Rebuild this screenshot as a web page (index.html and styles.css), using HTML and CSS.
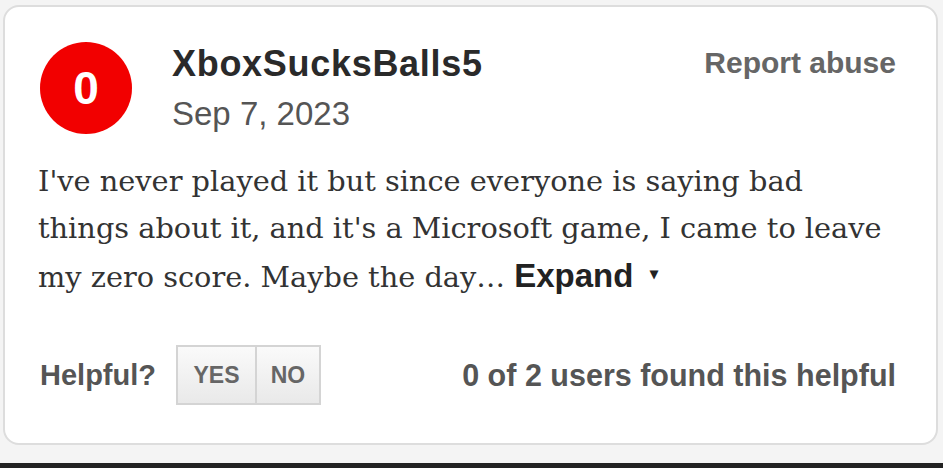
FILE: index.html
```html
<!DOCTYPE html>
<html lang="en">
<head>
  <meta charset="UTF-8">
  <title>User review</title>
  <link rel="stylesheet" href="styles.css">
</head>
<body>
  <div class="page">
    <div class="review">
      <div class="review-head">
        <div class="score">0</div>
        <div class="author">
          <div class="author-name">XboxSucksBalls5</div>
          <div class="review-date">Sep 7, 2023</div>
        </div>
        <a class="report" href="#">Report abuse</a>
      </div>

      <p class="review-body">I've never played it but since everyone is saying bad things about it, and it's a Microsoft game, I came to leave my zero score. Maybe the day&hellip; <a class="expand" href="#">Expand<span class="caret">&#9662;</span></a></p>

      <div class="review-foot">
        <div class="helpful">
          <span class="helpful-label">Helpful?</span>
          <div class="vote">
            <button type="button" class="yes">YES</button>
            <button type="button">NO</button>
          </div>
        </div>
        <div class="helpful-count">0 of 2 users found this helpful</div>
      </div>
    </div>
  </div>
</body>
</html>
```

FILE: styles.css
```css
body {
  margin: 0;
  background: #f4f4f4;
  font-family: "Liberation Sans", Arial, sans-serif;
  color: #333;
  height: 468px;
  overflow: hidden;
  border-bottom: 5px solid #222;
  box-sizing: border-box;
}

.page {
  padding: 5px 5px 0 3px;
}

.review {
  background: white;
  border: 2px solid #ddd;
  border-radius: 16px;
  height: 440px;
  box-sizing: border-box;
  padding: 34px 40px 0 33px;
}

.review-head {
  display: flex;
  align-items: flex-start;
  padding-left: 2px;
}

.score {
  width: 92px;
  height: 92px;
  border-radius: 50%;
  background: #f20000;
  color: white;
  font-family: "Liberation Sans", Arial, sans-serif;
  font-weight: bold;
  font-size: 46px;
  line-height: 92px;
  text-align: center;
  margin-top: 1px;
}

.author {
  margin-left: 40px;
  flex: 1;
}

.author-name {
  font-size: 36px;
  font-weight: bold;
  color: #2a2a2a;
  line-height: 40px;
  letter-spacing: 0.7px;
  margin-top: 3px;
}

.review-date {
  font-size: 33px;
  color: #555;
  line-height: 40px;
  margin-top: 10px;
}

.report {
  font-size: 30px;
  font-weight: bold;
  color: #666;
  text-decoration: none;
  margin-top: 5px;
}

.review-body {
  font-family: "DejaVu Serif", Georgia, serif;
  font-size: 28.8px;
  line-height: 47px;
  color: #333;
  margin: 24px -4px 0 0;
}

.expand {
  font-family: "Liberation Sans", Arial, sans-serif;
  font-size: 33px;
  font-weight: bold;
  color: #222;
  text-decoration: none;
}

.caret {
  display: inline-block;
  font-size: 16px;
  line-height: 1;
  vertical-align: 8px;
  margin-left: 17px;
}

.review-foot {
  display: flex;
  justify-content: space-between;
  align-items: center;
  margin-top: 44px;
  padding-left: 2px;
}

.helpful {
  display: flex;
  align-items: center;
  gap: 20px;
}

.helpful-label {
  font-size: 29px;
  font-weight: bold;
  color: #555;
}

.vote {
  display: flex;
  border: 2px solid #d4d4d4;
}

.vote button {
  font-family: "Liberation Sans", Arial, sans-serif;
  font-weight: bold;
  font-size: 23px;
  color: #666;
  background: linear-gradient(#fafafa, #e9e9e9);
  border: none;
  height: 56px;
  width: 64px;
  padding: 0;
}

.vote .yes {
  width: 77px;
}

.vote button + button {
  border-left: 2px solid #d4d4d4;
}

.helpful-count {
  font-size: 30.5px;
  font-weight: bold;
  color: #555;
}
```
